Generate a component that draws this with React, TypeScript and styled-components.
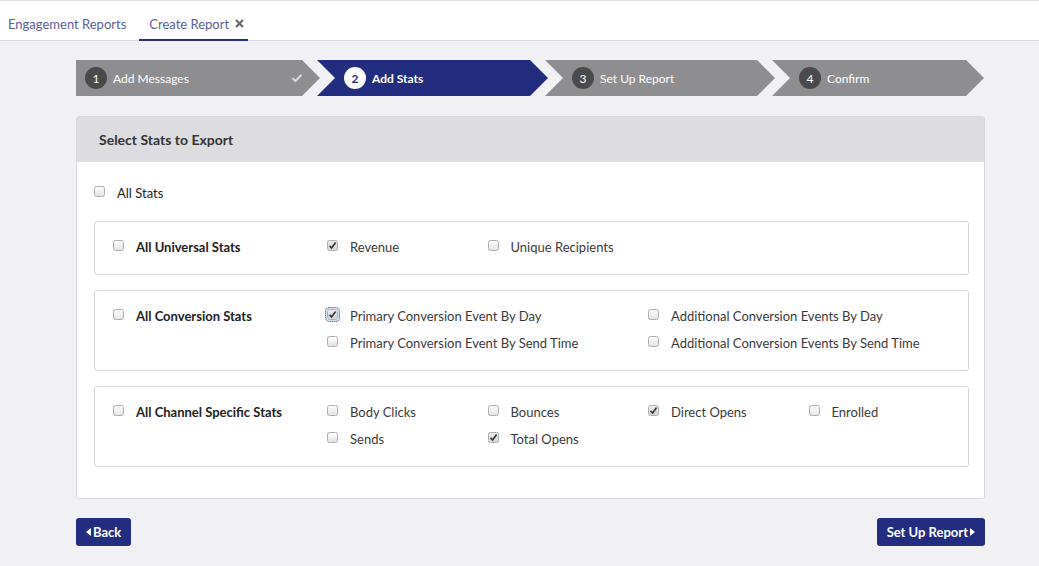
import React from "react";
import styled, { createGlobalStyle, css } from "styled-components";

const NAVY = "#222d7f";

const GlobalStyle = createGlobalStyle`
  html, body { margin: 0; padding: 0; }
  body {
    background: #f0f0f5;
    font-family: Lato, "Noto Sans", sans-serif;
    color: #333;
  }
  * { box-sizing: border-box; }
`;

const TopBar = styled.div`
  height: 41px;
  background: #fff;
  border-top: 1px solid #dedee2;
  border-bottom: 1px solid #d9d9de;
  display: flex;
  gap: 3px;
`;

const Tab = styled.div<{ $active?: boolean }>`
  height: 40px;
  padding: 5px 10px 0;
  display: flex;
  align-items: center;
  gap: 6px;
  font-size: 13px;
  color: #595e98;
  margin-bottom: -1px;
  &:first-child { padding-left: 8px; }
  ${(p) =>
    p.$active &&
    css`
      border-bottom: 2px solid ${NAVY};
      padding-top: 7px;
      padding-right: 4px;
    `}
`;

const Main = styled.main`
  padding: 19px 54px 20px 76px;
`;

const Stepper = styled.div`
  display: flex;
  height: 36px;
`;

const Step = styled.div<{ $active?: boolean; $first?: boolean; $w: number }>`
  width: ${(p) => p.$w}px;
  flex: none;
  height: 36px;
  background: ${(p) => (p.$active ? NAVY : "#8e8e90")};
  color: #fff;
  display: flex;
  align-items: center;
  gap: 6px;
  font-size: 12px;
  font-weight: ${(p) => (p.$active ? 700 : 400)};
  padding-left: ${(p) => (p.$first ? 9 : 27)}px;
  padding-right: 17px;
  margin-left: ${(p) => (p.$first ? 0 : -3)}px;
  clip-path: ${(p) =>
    p.$first
      ? "polygon(0 0, calc(100% - 18px) 0, 100% 50%, calc(100% - 18px) 100%, 0 100%)"
      : "polygon(0 0, calc(100% - 18px) 0, 100% 50%, calc(100% - 18px) 100%, 0 100%, 18px 50%)"};
`;

const StepNum = styled.span<{ $active?: boolean }>`
  width: 22px;
  height: 22px;
  border-radius: 50%;
  background: ${(p) => (p.$active ? "#fff" : "#4a4a4c")};
  color: ${(p) => (p.$active ? NAVY : "#fff")};
  font-weight: ${(p) => (p.$active ? 700 : 400)};
  display: flex;
  align-items: center;
  justify-content: center;
  font-size: 12px;
  flex: none;
`;

const StepLabel = styled.span`
  flex: 1;
`;

const Panel = styled.section`
  margin-top: 20px;
  background: #fff;
  border: 1px solid #d8d8dd;
  border-radius: 3px;
  overflow: hidden;
`;

const PanelHeader = styled.div`
  height: 45px;
  background: #dcdce1;
  display: flex;
  align-items: center;
  padding-left: 22px;
  font-size: 14px;
  font-weight: 700;
  color: #333;
`;

const PanelBody = styled.div`
  padding: 21px 15px 31px 17px;
`;

const AllRow = styled.div`
  display: flex;
  align-items: center;
  gap: 12px;
  height: 20px;
  font-size: 13px;
  color: #222;
  margin-bottom: 18px;
`;

const GroupBox = styled.div`
  border: 1px solid #d5d5da;
  border-radius: 3px;
  padding: 15px 18px 17px;
  display: flex;
  & + & { margin-top: 15px; }
`;

const GroupLabel = styled.div`
  width: 214px;
  flex: none;
  display: flex;
  align-items: center;
  gap: 12px;
  height: 20px;
  font-size: 13px;
  font-weight: 700;
  color: #222;
`;

const ItemsGrid = styled.div`
  display: grid;
  grid-template-columns: repeat(4, 160.5px);
  row-gap: 7px;
`;

const Item = styled.label<{ $span?: number }>`
  grid-column: span ${(p) => p.$span || 1};
  display: flex;
  align-items: center;
  gap: 12px;
  height: 20px;
  font-size: 13px;
  color: #3a3a3a;
  white-space: nowrap;
`;

const Box = styled.span<{ $checked?: boolean; $focus?: boolean }>`
  width: 11px;
  height: 11px;
  flex: none;
  border: 1px solid #aeaeb2;
  border-radius: 2.5px;
  background: ${(p) =>
    p.$checked
      ? "linear-gradient(#ececec, #d4d4d6)"
      : "linear-gradient(#fbfbfb, #e4e4e6)"};
  display: flex;
  align-items: center;
  justify-content: center;
  margin-top: -4px;
  ${(p) =>
    p.$focus &&
    css`
      outline: 1px dotted #555;
      outline-offset: 1px;
      box-shadow: 0 0 0 2px #cfe0f7;
    `}
`;

const Check = ({ checked, focus }: { checked?: boolean; focus?: boolean }) => (
  <Box $checked={checked} $focus={focus}>
    {checked && (
      <svg width="9" height="9" viewBox="0 0 9 9">
        <path d="M1.5 4.8 L3.6 7 L7.6 1.6" fill="none" stroke="#333" strokeWidth="1.6" />
      </svg>
    )}
  </Box>
);

const Footer = styled.div`
  margin-top: 19px;
  display: flex;
  justify-content: space-between;
`;

const Button = styled.button`
  height: 28px;
  background: ${NAVY};
  color: #fff;
  border: none;
  border-radius: 3px;
  padding: 0 10px;
  font-family: Lato, "Noto Sans", sans-serif;
  font-size: 13px;
  font-weight: 700;
  display: flex;
  align-items: center;
  gap: 2px;
  cursor: pointer;
`;

const Caret = ({ dir }: { dir: "left" | "right" }) => (
  <svg width="5" height="8" viewBox="0 0 5 8">
    {dir === "left" ? (
      <path d="M5 0 L0 4 L5 8 Z" fill="#fff" />
    ) : (
      <path d="M0 0 L5 4 L0 8 Z" fill="#fff" />
    )}
  </svg>
);

const CloseX = () => (
  <svg width="9" height="9" viewBox="0 0 9 9">
    <path d="M1 1 L8 8 M8 1 L1 8" stroke="#6a6a6e" strokeWidth="2.2" />
  </svg>
);

const CheckMark = () => (
  <svg width="12" height="10" viewBox="0 0 12 10">
    <path d="M1.5 5.2 L4.5 8 L10.5 1.8" fill="none" stroke="#d9d9dc" strokeWidth="2.2" />
  </svg>
);

type Stat = { label: string; checked?: boolean; focus?: boolean; span?: number };

const groups: { title: string; items: Stat[] }[] = [
  {
    title: "All Universal Stats",
    items: [{ label: "Revenue", checked: true }, { label: "Unique Recipients" }],
  },
  {
    title: "All Conversion Stats",
    items: [
      { label: "Primary Conversion Event By Day", checked: true, focus: true, span: 2 },
      { label: "Additional Conversion Events By Day", span: 2 },
      { label: "Primary Conversion Event By Send Time", span: 2 },
      { label: "Additional Conversion Events By Send Time", span: 2 },
    ],
  },
  {
    title: "All Channel Specific Stats",
    items: [
      { label: "Body Clicks" },
      { label: "Bounces" },
      { label: "Direct Opens", checked: true },
      { label: "Enrolled" },
      { label: "Sends" },
      { label: "Total Opens", checked: true },
    ],
  },
];

const steps = [
  { n: 1, label: "Add Messages", w: 244, done: true },
  { n: 2, label: "Add Stats", w: 231, active: true },
  { n: 3, label: "Set Up Report", w: 230 },
  { n: 4, label: "Confirm", w: 212 },
];

export default function App() {
  return (
    <>
      <GlobalStyle />
      <TopBar>
        <Tab>Engagement Reports</Tab>
        <Tab $active>
          Create Report <CloseX />
        </Tab>
      </TopBar>
      <Main>
        <Stepper>
          {steps.map((s, i) => (
            <Step key={s.n} $w={s.w} $first={i === 0} $active={s.active}>
              <StepNum $active={s.active}>{s.n}</StepNum>
              <StepLabel>{s.label}</StepLabel>
              {s.done && <CheckMark />}
            </Step>
          ))}
        </Stepper>
        <Panel>
          <PanelHeader>Select Stats to Export</PanelHeader>
          <PanelBody>
            <AllRow>
              <Check />
              All Stats
            </AllRow>
            {groups.map((g) => (
              <GroupBox key={g.title}>
                <GroupLabel>
                  <Check />
                  {g.title}
                </GroupLabel>
                <ItemsGrid>
                  {g.items.map((it) => (
                    <Item key={it.label} $span={it.span}>
                      <Check checked={it.checked} focus={it.focus} />
                      {it.label}
                    </Item>
                  ))}
                </ItemsGrid>
              </GroupBox>
            ))}
          </PanelBody>
        </Panel>
        <Footer>
          <Button>
            <Caret dir="left" />
            Back
          </Button>
          <Button>
            Set Up Report
            <Caret dir="right" />
          </Button>
        </Footer>
      </Main>
    </>
  );
}
